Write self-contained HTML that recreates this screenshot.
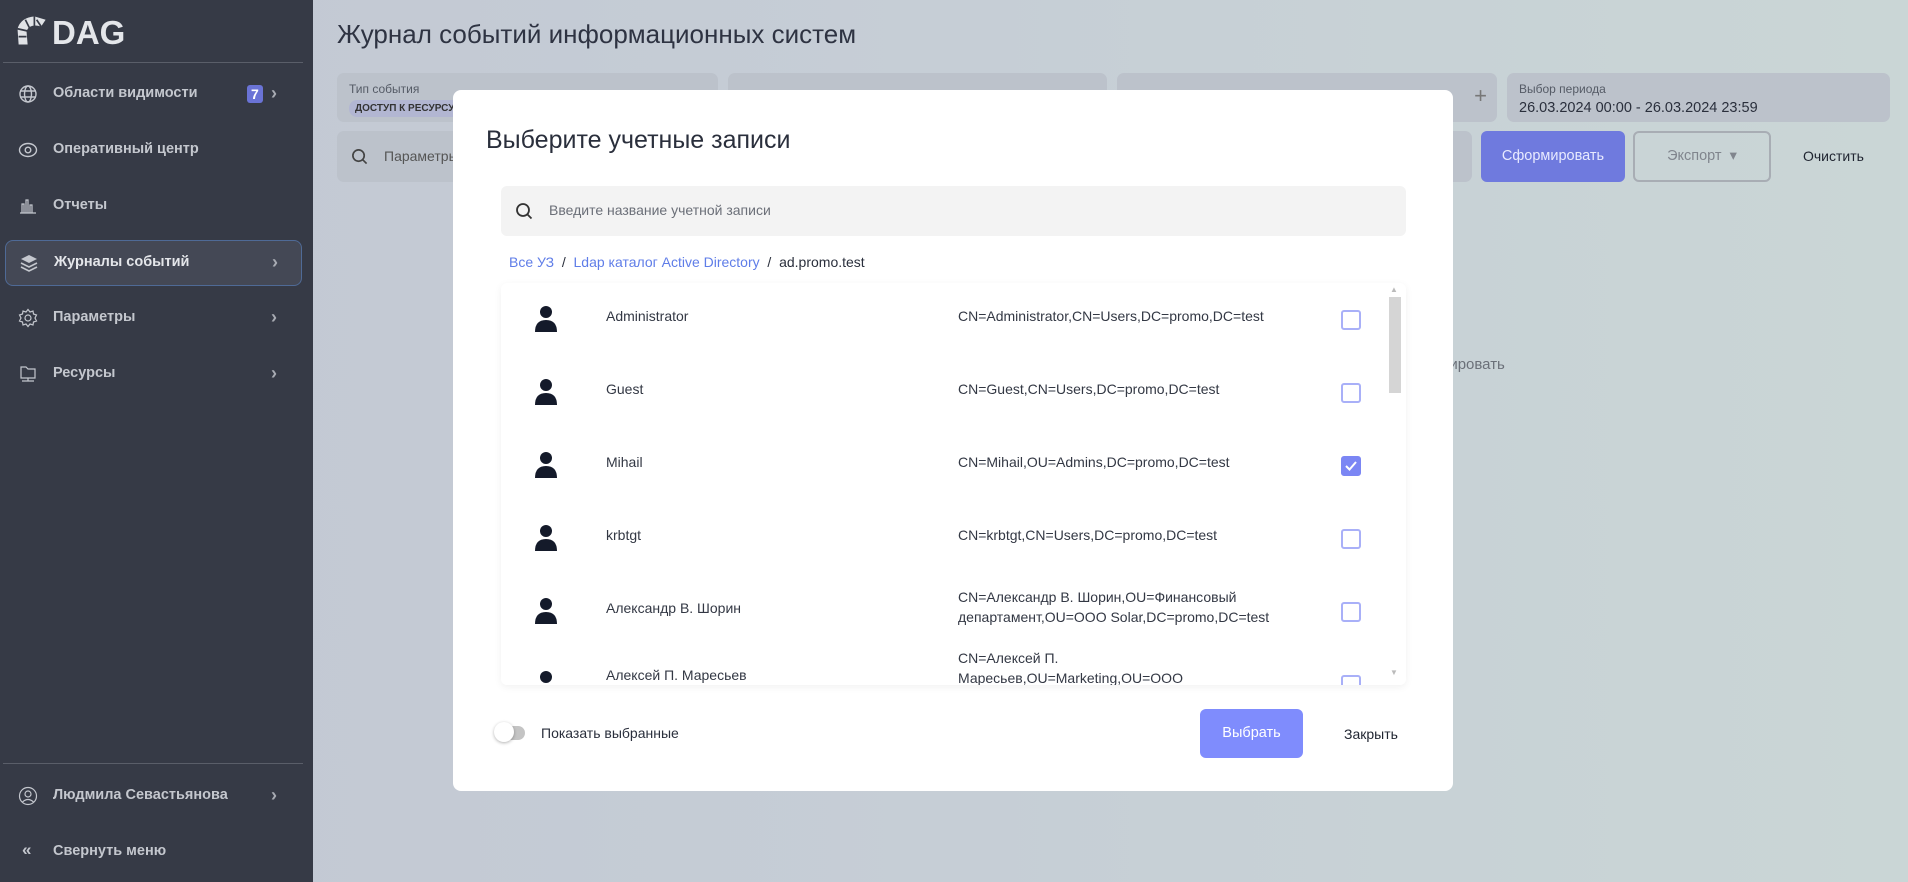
<!DOCTYPE html>
<html><head><meta charset="utf-8"><style>
*{box-sizing:border-box;margin:0;padding:0}
body{width:1908px;height:882px;overflow:hidden;font-family:"Liberation Sans","Noto Sans CJK SC",sans-serif;position:relative;background:linear-gradient(90deg,#c2c7d3 0%,#c6ced6 50%,#cad6d6 100%)}
.sb{position:absolute;left:0;top:0;width:313px;height:882px;background:#363a46;color:#c9ccd3}
.logo{position:absolute;left:18px;top:10px;font-size:33px;font-weight:bold;color:#e4e6ea}
.logo span{position:absolute;left:34px;top:4px}
.sep{position:absolute;left:3px;width:300px;height:1px;background:#5a5e69}
.it{position:absolute;left:0;width:313px;height:44px;font-size:14.5px;font-weight:bold;color:#c4c7ce}
.it .ic{position:absolute;left:18px;top:12px;width:20px;height:20px}
.it .tx{position:absolute;left:53px;top:13px}
.it .ch{position:absolute;left:271px;top:11px;color:#a8abb3;font-size:18px}
.act{left:5px;width:297px;border-radius:8px;border:1.5px solid #4f6a96;background:#444855}
.main{position:absolute;left:313px;top:0;right:0;bottom:0}
h1{position:absolute;left:24px;top:19px;font-size:26px;font-weight:normal;color:#2e3342}
.fb{position:absolute;background:#bcc2cb;border-radius:7px}
.lbl{font-size:12px;color:#555b66;position:absolute;left:12px;top:9px}
.modal{position:absolute;left:453px;top:90px;width:1000px;height:701px;background:#fff;border-radius:8px}
.mt{position:absolute;left:33px;top:36px;font-size:25px;color:#2a2f3c}
.srch{position:absolute;left:48px;top:96px;width:905px;height:50px;background:#f3f3f3;border-radius:6px}
.srch span{position:absolute;left:48px;top:16px;font-size:14px;color:#6b6f78}
.bc{position:absolute;left:56px;top:164px;font-size:14px;color:#2a2f3c}
.bc a{color:#5f7de8;text-decoration:none}
.list{position:absolute;left:48px;top:193px;width:905px;height:402px;overflow:hidden;border-radius:6px;box-shadow:0 2px 8px rgba(0,0,0,.06)}
.row{position:absolute;left:0;width:880px;height:73px;font-size:14px;color:#333844}
.row .u{position:absolute;left:33px;top:22px}
.row .n{position:absolute;left:105px;top:25px}
.row .d{position:absolute;left:457px;width:330px;line-height:20px}
.row .c{position:absolute;left:840px;top:27px;width:20px;height:20px;border:2px solid #a9b0f8;border-radius:3px}
.row .c.on{background:#7b86f4;border-color:#7b86f4}
.scr{position:absolute;left:888px;top:14px;width:12px;height:96px;background:#d5d5d5}
.btn{position:absolute;border-radius:6px;font-size:14.5px;text-align:center}
</style></head><body>
<div class="sb">
 <div class="logo"><svg width="34" height="36" viewBox="0 0 30 32" style="position:absolute;left:-4px;top:3px"><path d="M4 28 L3 14 Q6 4 18 3 L28 6 L24 12 Q14 9 11 16 L12 28 Z" fill="#e0e2e6"/><path d="M10 6 L14 14 M3 14 L12 16 M18 3 L18 12 M24 12 L20 6 M4 21 L11 21" stroke="#363a46" stroke-width="1.5"/></svg><span>DAG</span></div>
 <div class="sep" style="top:62px"></div>
 <div class="it" style="top:72px"><svg class="ic" viewBox="0 0 20 20" fill="none" stroke="#c4c7ce" stroke-width="1.4"><circle cx="10" cy="10" r="8"/><ellipse cx="10" cy="10" rx="3.5" ry="8"/><path d="M2 7h16M2 13h16"/></svg><span class="tx">Области видимости</span><span style="position:absolute;left:247px;top:13px;background:#6a73d6;color:#fff;font-size:14px;padding:1px 4px;border-radius:3px">7</span><span class="ch">›</span></div>
 <div class="it" style="top:128px"><svg class="ic" viewBox="0 0 20 20" fill="none" stroke="#c4c7ce" stroke-width="1.4"><ellipse cx="10" cy="10" rx="8.5" ry="6.5"/><circle cx="10" cy="10" r="2.8"/></svg><span class="tx">Оперативный центр</span></div>
 <div class="it" style="top:184px"><svg class="ic" viewBox="0 0 20 20" fill="none" stroke="#c4c7ce" stroke-width="1.2"><path d="M2 17h16M4 17V8h2v9M8 17V4h2v13M12 17V9h2v8"/></svg><span class="tx">Отчеты</span></div>
 <div class="it act" style="top:240px;height:46px"><svg class="ic" style="left:13px" viewBox="0 0 20 20" fill="#c4c7ce"><path d="M10 2 L18 6 L10 10 L2 6Z"/><path d="M2 10 L10 14 L18 10" fill="none" stroke="#c4c7ce" stroke-width="1.6"/><path d="M2 14 L10 18 L18 14" fill="none" stroke="#c4c7ce" stroke-width="1.6"/></svg><span class="tx" style="left:48px;color:#e4e6ea">Журналы событий</span><span class="ch" style="left:266px">›</span></div>
 <div class="it" style="top:296px"><svg class="ic" viewBox="0 0 20 20" fill="none" stroke="#c4c7ce" stroke-width="1.2"><circle cx="10" cy="10" r="3"/><path d="M10 1.5l2 2.5 3-1 .5 3 3 1-1.5 3 1.5 3-3 1-.5 3-3-1-2 2.5-2-2.5-3 1-.5-3-3-1 1.5-3-1.5-3 3-1 .5-3 3 1z"/></svg><span class="tx">Параметры</span><span class="ch">›</span></div>
 <div class="it" style="top:352px"><svg class="ic" viewBox="0 0 20 20" fill="none" stroke="#c4c7ce" stroke-width="1.2"><path d="M3 3h5l2 2h7v9H3z"/><path d="M10 14v3M4 17h12"/></svg><span class="tx">Ресурсы</span><span class="ch">›</span></div>
 <div class="sep" style="top:763px"></div>
 <div class="it" style="top:774px"><svg class="ic" viewBox="0 0 20 20" fill="none" stroke="#c4c7ce" stroke-width="1.2"><circle cx="10" cy="10" r="8.5"/><circle cx="10" cy="8" r="3"/><path d="M4.5 16 Q10 11 15.5 16"/></svg><span class="tx">Людмила Севастьянова</span><span class="ch">›</span></div>
 <div class="it" style="top:830px"><span class="ic" style="font-size:17px;top:10px;left:22px">«</span><span class="tx">Свернуть меню</span></div>
</div>
<div class="main">
 <h1>Журнал событий информационных систем</h1>
 <div class="fb" style="left:24px;top:73px;width:381px;height:49px"><span class="lbl">Тип события</span><span style="position:absolute;left:12px;top:27px;background:#b2b6d2;font-size:10px;font-weight:bold;padding:3px 6px;border-radius:8px;color:#333">ДОСТУП К РЕСУРСУ</span></div>
 <div class="fb" style="left:415px;top:73px;width:379px;height:49px"></div>
 <div class="fb" style="left:804px;top:73px;width:380px;height:49px"><span style="position:absolute;right:10px;top:10px;font-size:22px;color:#777">+</span></div>
 <div class="fb" style="left:1194px;top:73px;width:383px;height:49px"><span class="lbl">Выбор периода</span><span style="position:absolute;left:12px;top:27px;font-size:14.5px;color:#2a2f3c">26.03.2024 00:00 - 26.03.2024 23:59</span></div>
 <div class="fb" style="left:24px;top:131px;width:1135px;height:51px"><svg style="position:absolute;left:14px;top:17px" width="17" height="17" viewBox="0 0 18 18" fill="none" stroke="#444" stroke-width="1.8"><circle cx="8" cy="8" r="6"/><path d="M12.5 12.5l4 4"/></svg><span style="position:absolute;left:47px;top:17px;font-size:14px;color:#555">Параметры</span></div>
 <div class="btn" style="left:1168px;top:131px;width:144px;height:51px;background:#6f7ade;color:#e8eaff;line-height:51px">Сформировать</div>
 <div class="btn" style="left:1320px;top:131px;width:138px;height:51px;border:2px solid #a8adb4;color:#80858d;line-height:47px">Экспорт &nbsp;▾</div>
 <div style="position:absolute;left:1490px;top:148px;font-size:14px;color:#1f2430">Очистить</div>
 <div style="position:absolute;left:1126px;top:356px;font-size:15px;color:#6b7079">мировать</div>
</div>
<div class="modal">
 <div class="mt">Выберите учетные записи</div>
 <div class="srch"><svg style="position:absolute;left:14px;top:16px" width="18" height="18" viewBox="0 0 18 18" fill="none" stroke="#333" stroke-width="1.8"><circle cx="8" cy="8" r="6"/><path d="M12.5 12.5l4 4"/></svg><span>Введите название учетной записи</span></div>
 <div class="bc"><a>Все УЗ</a> &nbsp;/&nbsp; <a>Ldap каталог Active Directory</a> &nbsp;/&nbsp; ad.promo.test</div>
 <div class="list">
  <div class="scr"></div>
  <div style="position:absolute;left:889px;top:2px;font-size:8px;color:#bbb">▲</div>
  <div style="position:absolute;left:889px;top:385px;font-size:8px;color:#bbb">▼</div>
  <div class="row" style="top:0"><svg class="u" width="24" height="28" viewBox="0 0 24 28"><circle cx="12" cy="7" r="6" fill="#141a2a"/><path d="M1 27 Q1 15 12 15 Q23 15 23 27Z" fill="#141a2a"/></svg><span class="n">Administrator</span><span class="d" style="top:23px">CN=Administrator,CN=Users,DC=promo,DC=test</span><span class="c"></span></div>
  <div class="row" style="top:73px"><svg class="u" width="24" height="28" viewBox="0 0 24 28"><circle cx="12" cy="7" r="6" fill="#141a2a"/><path d="M1 27 Q1 15 12 15 Q23 15 23 27Z" fill="#141a2a"/></svg><span class="n">Guest</span><span class="d" style="top:23px">CN=Guest,CN=Users,DC=promo,DC=test</span><span class="c"></span></div>
  <div class="row" style="top:146px"><svg class="u" width="24" height="28" viewBox="0 0 24 28"><circle cx="12" cy="7" r="6" fill="#141a2a"/><path d="M1 27 Q1 15 12 15 Q23 15 23 27Z" fill="#141a2a"/></svg><span class="n">Mihail</span><span class="d" style="top:23px">CN=Mihail,OU=Admins,DC=promo,DC=test</span><span class="c on"><svg width="16" height="16" viewBox="0 0 16 16" style="position:absolute;left:0;top:0"><path d="M3 8l3.5 3.5L13 4" stroke="#fff" stroke-width="2" fill="none"/></svg></span></div>
  <div class="row" style="top:219px"><svg class="u" width="24" height="28" viewBox="0 0 24 28"><circle cx="12" cy="7" r="6" fill="#141a2a"/><path d="M1 27 Q1 15 12 15 Q23 15 23 27Z" fill="#141a2a"/></svg><span class="n">krbtgt</span><span class="d" style="top:23px">CN=krbtgt,CN=Users,DC=promo,DC=test</span><span class="c"></span></div>
  <div class="row" style="top:292px"><svg class="u" width="24" height="28" viewBox="0 0 24 28"><circle cx="12" cy="7" r="6" fill="#141a2a"/><path d="M1 27 Q1 15 12 15 Q23 15 23 27Z" fill="#141a2a"/></svg><span class="n">Александр В. Шорин</span><span class="d" style="top:12px">CN=Александр В. Шорин,OU=Финансовый департамент,OU=OOO Solar,DC=promo,DC=test</span><span class="c"></span></div>
  <div class="row" style="top:365px"><svg class="u" width="24" height="28" viewBox="0 0 24 28"><circle cx="12" cy="7" r="6" fill="#141a2a"/><path d="M1 27 Q1 15 12 15 Q23 15 23 27Z" fill="#141a2a"/></svg><span class="n" style="top:19px">Алексей П. Маресьев</span><span class="d" style="top:0px;width:240px;word-break:break-all">CN=Алексей П.<br>Маресьев,OU=Marketing,OU=OOO</span><span class="c"></span></div>
 </div>
 <div style="position:absolute;left:42px;top:636px;width:30px;height:14px;border-radius:7px;background:#c4c4c4"></div>
 <div style="position:absolute;left:41px;top:632px;width:20px;height:20px;border-radius:50%;background:#fff;box-shadow:0 1px 3px rgba(0,0,0,.3)"></div>
 <div style="position:absolute;left:88px;top:635px;font-size:14px;color:#2a2f3c">Показать выбранные</div>
 <div class="btn" style="left:747px;top:619px;width:103px;height:49px;background:#7f8cfd;color:#fff;line-height:49px">Выбрать</div>
 <div style="position:absolute;left:891px;top:636px;font-size:14px;color:#1f2430">Закрыть</div>
</div>
</body></html>
